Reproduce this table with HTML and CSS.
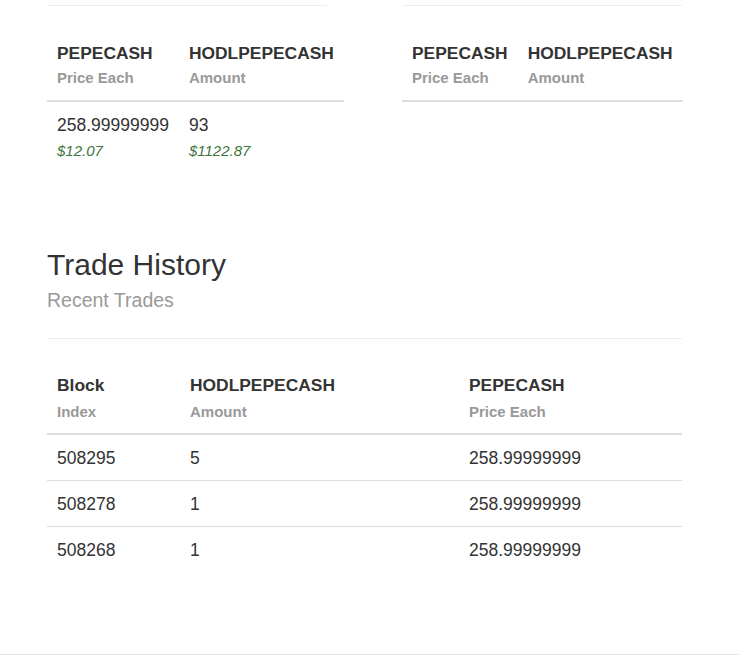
FILE: index.html
```html
<!DOCTYPE html>
<html>
<head>
<meta charset="utf-8">
<link rel="stylesheet" href="styles.css">
</head>
<body>
<div class="page">
  <div class="markets">
    <div class="market">
      <hr class="rule">
      <table class="tbl orders">
        <thead>
          <tr>
            <th><span class="h">PEPECASH</span><span class="sub">Price Each</span></th>
            <th><span class="h">HODLPEPECASH</span><span class="sub">Amount</span></th>
          </tr>
        </thead>
        <tbody>
          <tr>
            <td><span class="v">258.99999999</span><span class="usd">$12.07</span></td>
            <td><span class="v">93</span><span class="usd">$1122.87</span></td>
          </tr>
        </tbody>
      </table>
    </div>
    <div class="market">
      <hr class="rule">
      <table class="tbl orders">
        <thead>
          <tr>
            <th><span class="h">PEPECASH</span><span class="sub">Price Each</span></th>
            <th><span class="h">HODLPEPECASH</span><span class="sub">Amount</span></th>
          </tr>
        </thead>
      </table>
    </div>
  </div>

  <section class="history">
    <h2 class="title">Trade History</h2>
    <p class="subtitle">Recent Trades</p>
    <hr class="rule">
    <table class="tbl trades">
      <colgroup>
        <col class="c1"><col class="c2"><col>
      </colgroup>
      <thead>
        <tr>
          <th><span class="h">Block</span><span class="sub">Index</span></th>
          <th><span class="h">HODLPEPECASH</span><span class="sub">Amount</span></th>
          <th><span class="h">PEPECASH</span><span class="sub">Price Each</span></th>
        </tr>
      </thead>
      <tbody>
        <tr><td>508295</td><td>5</td><td>258.99999999</td></tr>
        <tr><td>508278</td><td>1</td><td>258.99999999</td></tr>
        <tr><td>508268</td><td>1</td><td>258.99999999</td></tr>
      </tbody>
    </table>
  </section>
  <hr class="footer-rule">
</div>
</body>
</html>
```

FILE: styles.css
```css
* { box-sizing: border-box; }
html, body {
  margin: 0;
  padding: 0;
  background: #fff;
}
body {
  font-family: "Liberation Sans", Arial, sans-serif;
  color: #333;
  font-size: 17.5px;
  line-height: 22px;
}
.page {
  padding-top: 5px;
}
.rule {
  margin: 0;
  border: 0;
  border-top: 1px solid #eee;
  height: 0;
}
.markets {
  display: grid;
  grid-template-columns: 280px 280px;
  column-gap: 75px;
  padding-left: 47px;
}
.market .rule {
  margin-bottom: 27px;
}
.tbl {
  border-collapse: collapse;
  border-spacing: 0;
}
.tbl th {
  text-align: left;
  vertical-align: bottom;
  padding: 9px 10px 12px;
  border-bottom: 2px solid #ddd;
  white-space: nowrap;
}
.tbl .h {
  display: block;
  font-weight: bold;
  font-size: 17.4px;
  line-height: 22px;
  color: #333;
}
.tbl .sub {
  display: block;
  margin-top: 4px;
  font-weight: bold;
  font-size: 15px;
  line-height: 20px;
  color: #999;
}
.orders td {
  padding: 12px 10px 8px;
  vertical-align: top;
  white-space: nowrap;
}
.orders .v {
  display: block;
  font-size: 17.5px;
  line-height: 22px;
}
.orders .usd {
  display: block;
  margin-top: 5px;
  font-size: 15px;
  line-height: 20px;
  font-style: italic;
  color: #3c763d;
}
.history {
  margin: 0 57px 0 47px;
  padding-top: 79px;
}
.title {
  margin: 0;
  font-size: 30px;
  line-height: 33px;
  font-weight: normal;
  color: #333;
}
.subtitle {
  margin: 7px 0 0;
  font-size: 19.5px;
  line-height: 24px;
  color: #999;
}
.history .rule {
  margin-top: 26px;
  margin-bottom: 27px;
}
.trades {
  width: 100%;
  table-layout: fixed;
}
.trades .c1 { width: 133px; }
.trades .c2 { width: 279px; }
.trades th {
  padding: 8px 10px 11px;
}
.trades .sub {
  margin-top: 6px;
}
.trades td {
  padding: 12px 10px 11px;
  border-top: 1px solid #ddd;
  font-size: 17.5px;
  line-height: 22px;
}
.trades tbody tr:first-child td {
  border-top: 0;
}
.footer-rule {
  margin: 82px 0 0;
  border: 0;
  border-top: 1px solid #e5e5e5;
  height: 0;
}
```
